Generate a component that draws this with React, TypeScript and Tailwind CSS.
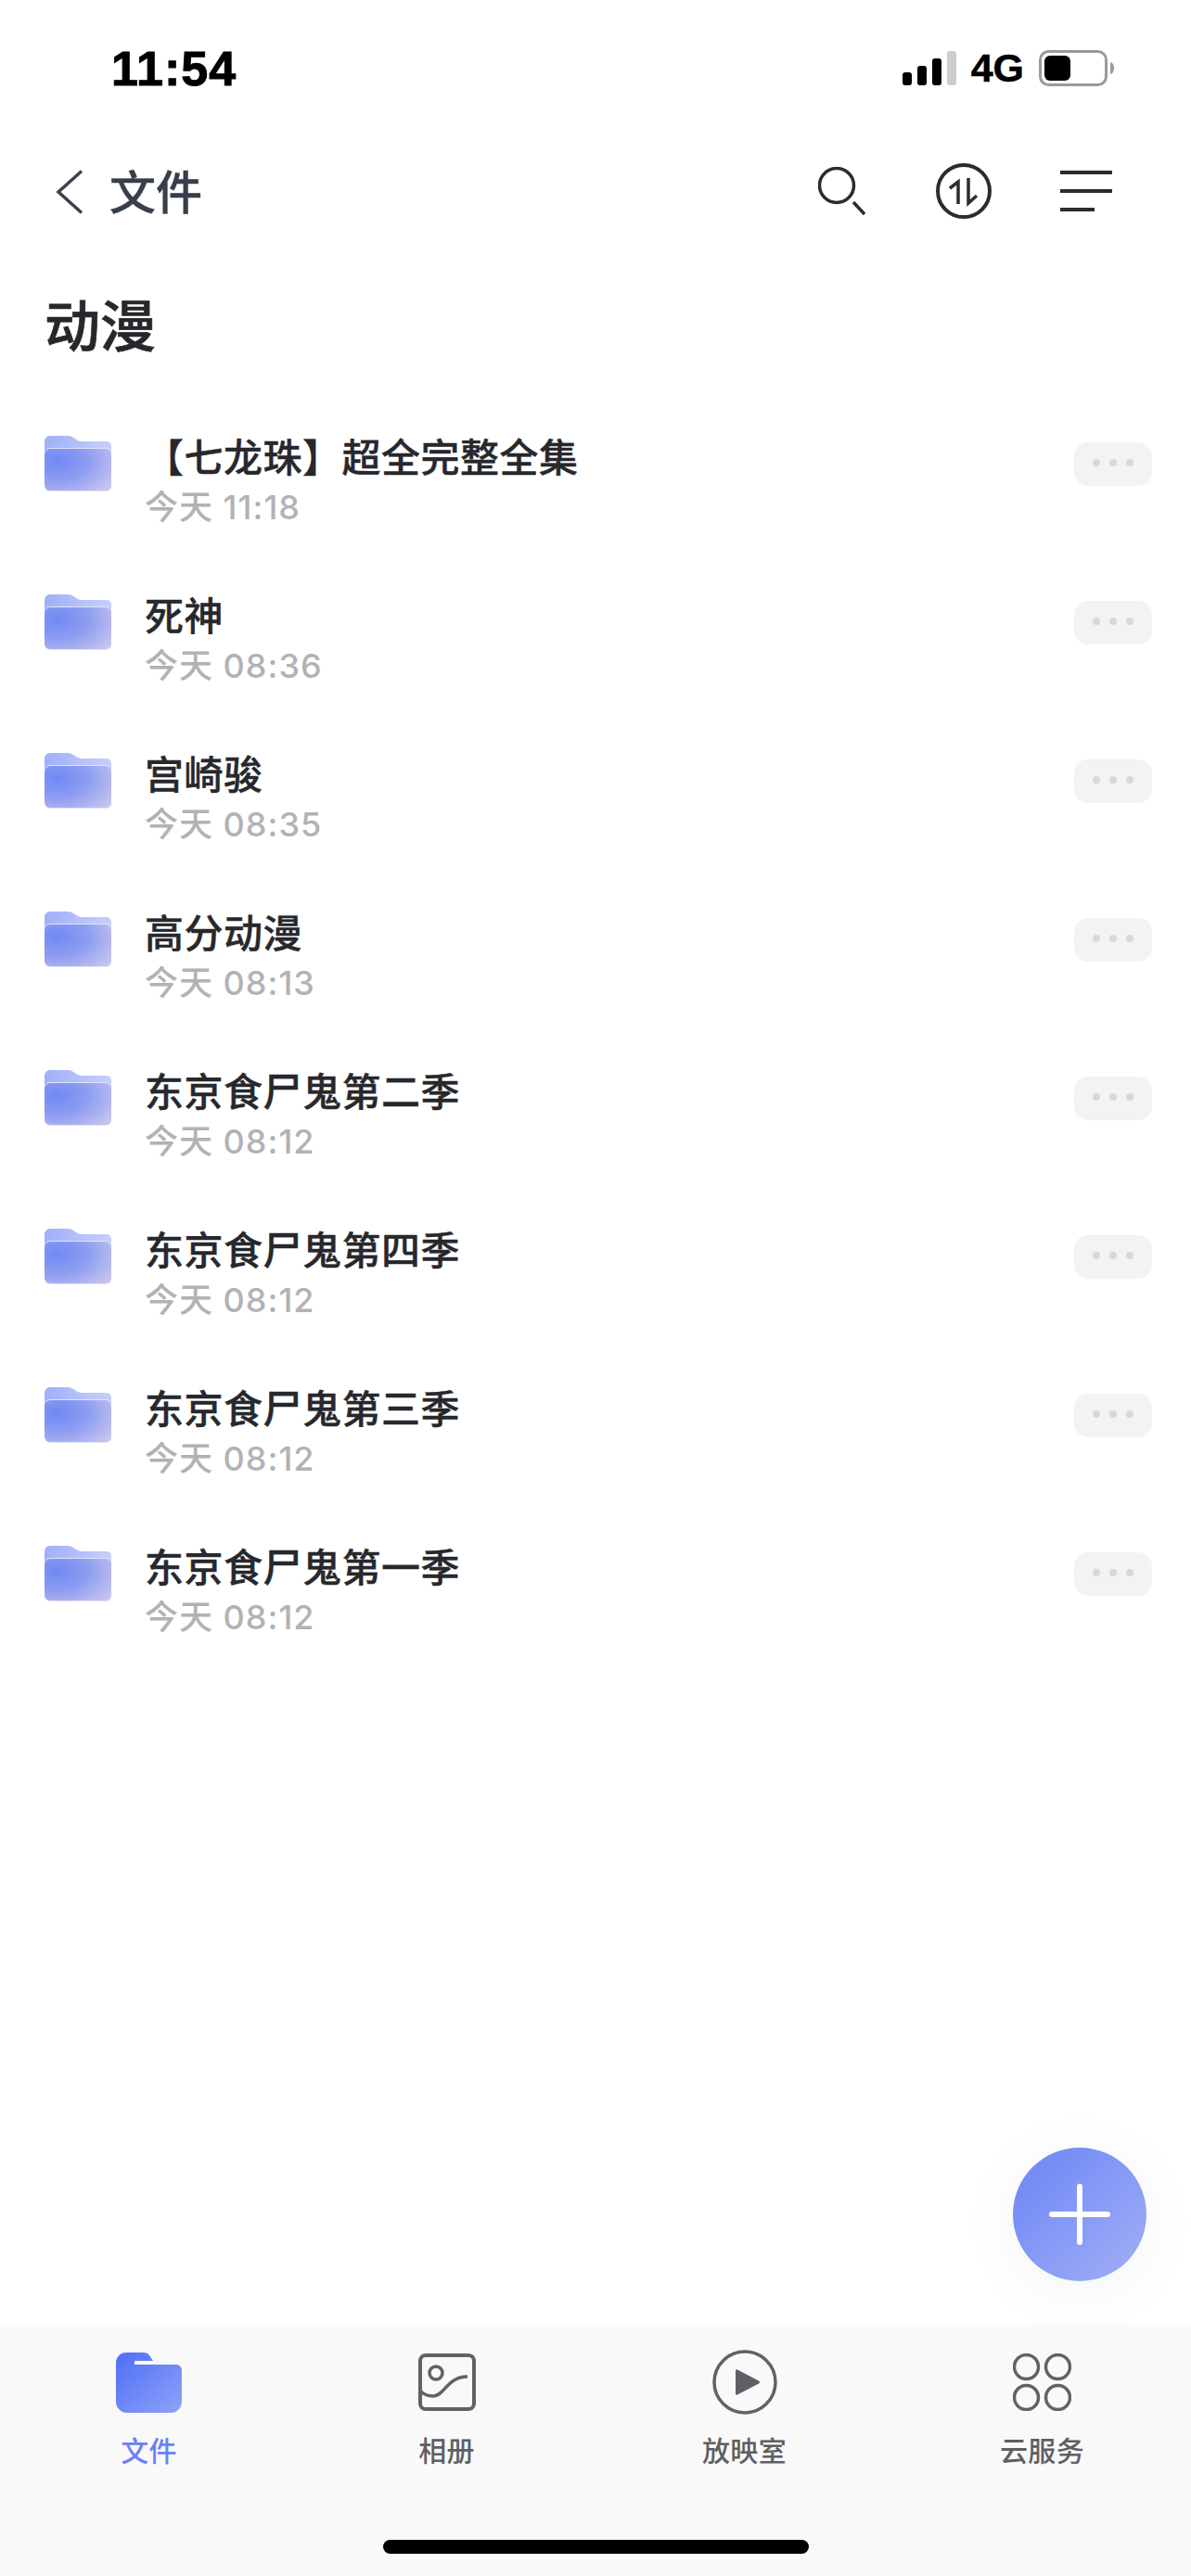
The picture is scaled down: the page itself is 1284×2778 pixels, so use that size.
import React from "react";

const rows = [
  ["【七龙珠】超全完整全集", "今天 11:18"],
  ["死神", "今天 08:36"],
  ["宫崎骏", "今天 08:35"],
  ["高分动漫", "今天 08:13"],
  ["东京食尸鬼第二季", "今天 08:12"],
  ["东京食尸鬼第四季", "今天 08:12"],
  ["东京食尸鬼第三季", "今天 08:12"],
  ["东京食尸鬼第一季", "今天 08:12"],
];

function Folder({ id }: { id: string }) {
  return (
    <svg width="72" height="60" viewBox="0 0 72 60" className="shrink-0">
      <defs>
        <linearGradient id={`b${id}`} x1="0" y1="0" x2="1" y2="0">
          <stop offset="0" stopColor="#9fb0f9" />
          <stop offset="1" stopColor="#c6cffb" />
        </linearGradient>
        <radialGradient id={`f${id}`} cx="0.18" cy="0.3" r="1.05">
          <stop offset="0" stopColor="#7089f4" />
          <stop offset="0.45" stopColor="#8e9df1" />
          <stop offset="1" stopColor="#cdc9ee" />
        </radialGradient>
      </defs>
      <path d="M0 6a6 6 0 0 1 6-6h20q3 0 6 2.500t7 3.500h28a5 5 0 0 1 5 5v20H0Z" fill={`url(#b${id})`} />
      <rect x="0" y="13" width="72" height="47" rx="6" fill="#dfe3fb" />
      <path d="M0 20a6 6 0 0 1 6-6h60a6 6 0 0 1 6 6v34a5 5 0 0 1-5 5H6a6 6 0 0 1-6-6Z" fill={`url(#f${id})`} />
    </svg>
  );
}

function Row({ title, time, id }: { title: string; time: string; id: string }) {
  return (
    <div className="h-[171px] flex items-start pl-[48px] pr-[42px]">
      <div className="mt-[36px]">
        <Folder id={id} />
      </div>
      <div className="ml-[36px] flex-1 mt-[35px]">
        <div className="text-[42px] leading-[50px] tracking-[0.5px] font-medium text-[#27282c] [-webkit-text-stroke:0.4px_#27282c]">{title}</div>
        <div className="mt-[6px] text-[36px] leading-[44px] tracking-[1px] font-medium text-[#b2b2b4]">{time}</div>
      </div>
      <div className="mt-[43px] w-[84px] h-[47px] pb-[3px] rounded-[15px] bg-[#f3f3f3] flex items-center justify-center gap-[10px]">
        <span className="w-[8px] h-[8px] rounded-full bg-[#d8d8d8]" />
        <span className="w-[8px] h-[8px] rounded-full bg-[#d8d8d8]" />
        <span className="w-[8px] h-[8px] rounded-full bg-[#d8d8d8]" />
      </div>
    </div>
  );
}

function Tab({ label, active, children }: { label: string; active?: boolean; children: React.ReactNode }) {
  return (
    <div className="flex flex-col items-center">
      <div className="h-[72px] flex items-center justify-center">{children}</div>
      <div className={`mt-[18px] text-[30px] leading-[40px] tracking-[0.3px] font-medium ${active ? "text-[#6a80f6]" : "text-[#5f5f63]"}`}>{label}</div>
    </div>
  );
}

export default function App() {
  return (
    <div
      lang="zh-CN"
      className="relative w-[1284px] h-[2778px] bg-white flex flex-col overflow-hidden font-['Inter','Noto_Sans_CJK_SC',sans-serif]"
    >
      {/* status bar */}
      <div className="h-[147px] shrink-0 flex items-center justify-between pl-[120px] pr-[82px]">
        <span className="text-[52px] leading-none font-bold tracking-[1px] text-black font-['Liberation_Sans',sans-serif] [-webkit-text-stroke:1px_#000]">11:54</span>
        <div className="flex items-center">
          <svg width="58" height="38" viewBox="0 0 58 38">
            <rect x="0" y="23" width="10" height="14" rx="3" fill="#000" />
            <rect x="16" y="16" width="10" height="21" rx="3" fill="#000" />
            <rect x="32" y="8" width="10" height="29" rx="3" fill="#000" />
            <rect x="48" y="0" width="10" height="37" rx="3" fill="#cdcdcd" />
          </svg>
          <span className="ml-[16px] text-[43px] leading-none font-bold text-black font-['Liberation_Sans',sans-serif] [-webkit-text-stroke:0.5px_#000]">4G</span>
          <svg width="82" height="40" viewBox="0 0 82 40" className="ml-[16px]">
            <rect x="1.500" y="1.500" width="71" height="36" rx="9" fill="#fff" stroke="#9a9a9a" strokeWidth="3" />
            <rect x="6" y="6" width="28" height="27" rx="6" fill="#000" />
            <path d="M77 13q4 1 4 6.500t-4 6.500Z" fill="#9a9a9a" />
          </svg>
        </div>
      </div>

      {/* nav */}
      <div className="h-[118px] shrink-0 flex items-center pl-[60px] pr-[85px]">
        <svg width="30" height="48" viewBox="0 0 30 48" className="shrink-0 mt-[2px]">
          <path d="M28 1.500 3 24l25 22.500" fill="none" stroke="#3a434f" strokeWidth="3.500" />
        </svg>
        <span className="ml-[28px] pt-[4px] text-[50px] leading-[60px] font-medium text-[#363f4b] [-webkit-text-stroke:0.4px_#363f4b]">文件</span>
        <div className="ml-auto flex items-center">
          <svg width="52" height="52" viewBox="0 0 52 52">
            <circle cx="20" cy="20" r="18.500" fill="none" stroke="#2b2c30" strokeWidth="3.500" />
            <path d="M38 38l12 13" stroke="#2b2c30" strokeWidth="3.500" />
          </svg>
          <svg width="60" height="60" viewBox="0 0 60 60" className="ml-[75px]">
            <circle cx="30" cy="30" r="28" fill="none" stroke="#2b2c30" strokeWidth="4" />
            <path d="M24 44V20l-9 7M35 16v27l9-8" fill="none" stroke="#2b2c30" strokeWidth="3.500" />
          </svg>
          <div className="ml-[74px] w-[56px] flex flex-col gap-[16px]">
            <div className="h-[4px] w-[56px] bg-[#2b2c30]" />
            <div className="h-[4px] w-[56px] bg-[#2b2c30]" />
            <div className="h-[4px] w-[37px] bg-[#2b2c30]" />
          </div>
        </div>
      </div>

      {/* title */}
      <div className="h-[169px] shrink-0 pl-[48px] pt-[57px]">
        <div className="text-[60px] leading-[60px] font-medium text-[#27282c] [-webkit-text-stroke:0.7px_#27282c]">动漫</div>
      </div>

      {/* list */}
      <div className="flex-1">
        {rows.map(([t, d], i) => (
          <Row key={i} id={String(i)} title={t} time={d} />
        ))}
      </div>

      {/* tab bar */}
      <div className="h-[271px] shrink-0 bg-[#f9f9f9] flex flex-col">
        <div className="grid grid-cols-4 pt-[26px]">
          <Tab label="文件" active>
            <svg width="71" height="65" viewBox="0 0 71 65">
              <defs>
                <linearGradient id="tabf" x1="0" y1="0" x2="1" y2="1">
                  <stop offset="0" stopColor="#4e6ef8" />
                  <stop offset="1" stopColor="#8fa2f7" />
                </linearGradient>
              </defs>
              <path
                d="M0 11a11 11 0 0 1 11-11h19q4 0 6 3l4 6H20v4h45a6 6 0 0 1 6 6v34a12 12 0 0 1-12 12H12a12 12 0 0 1-12-12Z"
                fill="url(#tabf)"
              />
            </svg>
          </Tab>
          <Tab label="相册">
            <svg width="62" height="62" viewBox="0 0 62 62">
              <rect x="2" y="2" width="58" height="58" rx="6" fill="none" stroke="#626266" strokeWidth="4" />
              <circle cx="19" cy="21" r="7" fill="none" stroke="#626266" strokeWidth="3.500" />
              <path d="M2 40C6 45 12 46 16 46 28 46 31 25 53 25" fill="none" stroke="#626266" strokeWidth="3.500" />
            </svg>
          </Tab>
          <Tab label="放映室">
            <svg width="70" height="70" viewBox="0 0 70 70">
              <circle cx="35" cy="35" r="33" fill="none" stroke="#626266" strokeWidth="3.500" />
              <path d="M25 23q0-2.500 2-1.500l23 12q2 1.500 0 3l-23 12q-2 1-2-1.500Z" fill="#5f5f66" />
            </svg>
          </Tab>
          <Tab label="云服务">
            <svg width="63" height="62" viewBox="0 0 63 62">
              <circle cx="14.500" cy="14.500" r="13" fill="none" stroke="#626266" strokeWidth="3.500" />
              <circle cx="48.500" cy="14.500" r="13" fill="none" stroke="#626266" strokeWidth="3.500" />
              <circle cx="14.500" cy="47.500" r="13" fill="none" stroke="#626266" strokeWidth="3.500" />
              <circle cx="48.500" cy="47.500" r="13" fill="none" stroke="#626266" strokeWidth="3.500" />
            </svg>
          </Tab>
        </div>
        <div className="mt-[76px] mx-auto w-[459px] h-[15px] rounded-full bg-black" />
      </div>

      {/* FAB */}
      <div className="absolute left-[1092px] top-[2316px] w-[144px] h-[144px] rounded-full bg-gradient-to-br from-[#6c84f5] to-[#a2aff5] shadow-[0_10px_70px_rgba(0,0,0,0.05)] flex items-center justify-center">
        <svg width="66" height="66" viewBox="0 0 66 66">
          <path d="M33 3v60M3 33h60" stroke="#fff" strokeWidth="6" strokeLinecap="round" />
        </svg>
      </div>
    </div>
  );
}
